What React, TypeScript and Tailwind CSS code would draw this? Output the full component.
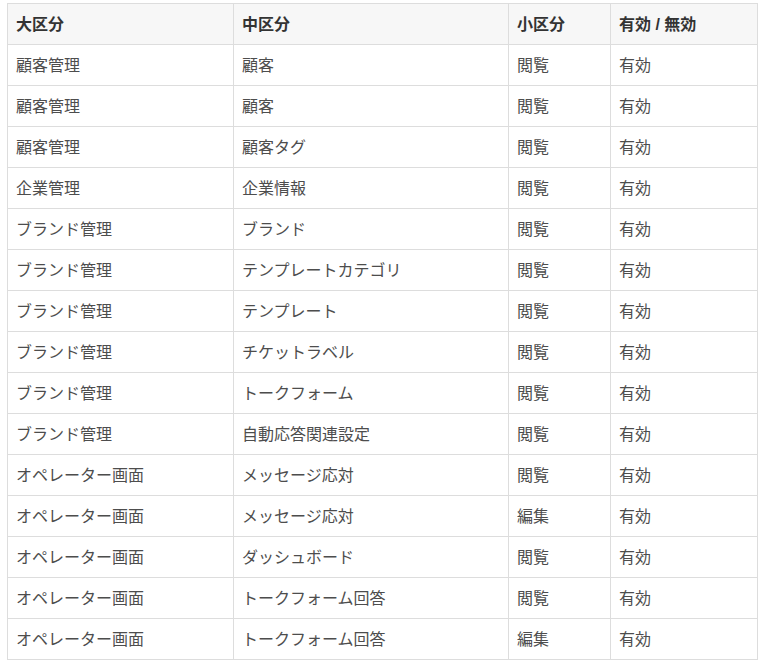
const ROWS: [string, string, string, string][] = [
  ["顧客管理", "顧客", "閲覧", "有効"],
  ["顧客管理", "顧客", "閲覧", "有効"],
  ["顧客管理", "顧客タグ", "閲覧", "有効"],
  ["企業管理", "企業情報", "閲覧", "有効"],
  ["ブランド管理", "ブランド", "閲覧", "有効"],
  ["ブランド管理", "テンプレートカテゴリ", "閲覧", "有効"],
  ["ブランド管理", "テンプレート", "閲覧", "有効"],
  ["ブランド管理", "チケットラベル", "閲覧", "有効"],
  ["ブランド管理", "トークフォーム", "閲覧", "有効"],
  ["ブランド管理", "自動応答関連設定", "閲覧", "有効"],
  ["オペレーター画面", "メッセージ応対", "閲覧", "有効"],
  ["オペレーター画面", "メッセージ応対", "編集", "有効"],
  ["オペレーター画面", "ダッシュボード", "閲覧", "有効"],
  ["オペレーター画面", "トークフォーム回答", "閲覧", "有効"],
  ["オペレーター画面", "トークフォーム回答", "編集", "有効"],
];

const HEADERS = ["大区分", "中区分", "小区分", "有効 / 無効"];
const WIDTHS = ["w-[226px]", "w-[275px]", "w-[102px]", "w-[147px]"];

export default function App() {
  return (
    <div
      className="bg-white pl-[7px] pt-[3px] w-[762px] h-[665px]"
      style={{ fontFamily: '"Helvetica Neue", "Liberation Sans", "Noto Sans CJK JP", sans-serif' }}
    >
      <table className="w-[750px] border-collapse table-fixed text-[16px]">
        <thead>
          <tr className="bg-[#f7f7f7]">
            {HEADERS.map((h, i) => (
              <th
                key={h}
                className={`${WIDTHS[i]} h-[41px] border border-[#dddddd] px-2 pt-px text-left font-bold text-[#333333] leading-none`}
              >
                {h}
              </th>
            ))}
          </tr>
        </thead>
        <tbody>
          {ROWS.map((row, r) => (
            <tr key={r}>
              {row.map((cell, c) => (
                <td
                  key={c}
                  className="h-[41px] border border-[#dddddd] px-2 pt-px text-[#4d4d4d] leading-none"
                >
                  {cell}
                </td>
              ))}
            </tr>
          ))}
        </tbody>
      </table>
    </div>
  );
}
